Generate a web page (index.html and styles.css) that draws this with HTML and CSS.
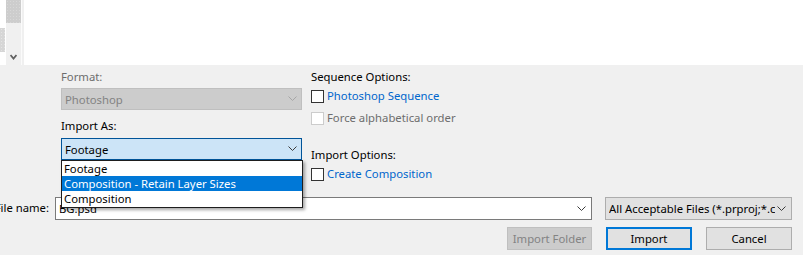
FILE: index.html
```html
<!DOCTYPE html>
<html>
<head>
<meta charset="utf-8">
<link rel="stylesheet" href="styles.css">
</head>
<body>
<div class="top">
  <div class="edge"><div class="tex"></div></div>
  <div class="sb">
    <div class="thumb"></div>
    <svg class="sb-chev" width="7" height="6" viewBox="0 0 7 6"><polyline points="0.5,1 3.5,4.5 6.5,1" fill="none" stroke="#606060" stroke-width="1.8"/></svg>
  </div>
  <div class="sep"></div>
  <div class="pane"></div>
</div>
<div class="main">
  <div class="opts">
    <div class="col-left">
      <div class="label label-first disabled">Format:</div>
      <div class="combo combo-disabled">
        <span>Photoshop</span>
        <svg width="9" height="6" viewBox="0 0 9 6"><polyline points="0.5,0.5 4.5,4.5 8.5,0.5" fill="none" stroke="#a6a6a6" stroke-width="1"/></svg>
      </div>
      <div class="label label-second">Import As:</div>
      <div class="combo combo-focus">
        <span>Footage</span>
        <svg width="9" height="6" viewBox="0 0 9 6"><polyline points="0.5,0.5 4.5,4.5 8.5,0.5" fill="none" stroke="#3c3c3c" stroke-width="1"/></svg>
      </div>
      <ul class="droplist">
        <li>Footage</li>
        <li class="sel">Composition - Retain Layer Sizes</li>
        <li>Composition</li>
      </ul>
    </div>
    <div class="col-right">
      <div class="heading">Sequence Options:</div>
      <div class="check check-1"><span class="box"></span><span class="ctext link">Photoshop Sequence</span></div>
      <div class="check check-2"><span class="box box-disabled"></span><span class="ctext disabled">Force alphabetical order</span></div>
      <div class="heading heading-2">Import Options:</div>
      <div class="check check-3"><span class="box"></span><span class="ctext link">Create Composition</span></div>
    </div>
  </div>
  <div class="filerow">
    <div class="flabel"><span>File name:</span></div>
    <div class="input">
      <span>BG.psd</span>
      <svg width="9" height="6" viewBox="0 0 9 6"><polyline points="0.5,0.5 4.5,4.5 8.5,0.5" fill="none" stroke="#3c3c3c" stroke-width="1"/></svg>
    </div>
    <div class="filter">
      <span class="ftext">All Acceptable Files (*.prproj;*.chproj;*.aep;*.psd)</span>
      <svg width="9" height="6" viewBox="0 0 9 6"><polyline points="0.5,0.5 4.5,4.5 8.5,0.5" fill="none" stroke="#3c3c3c" stroke-width="1"/></svg>
    </div>
  </div>
  <div class="btnrow">
    <div class="btn btn-disabled">Import Folder</div>
    <div class="btn btn-default">Import</div>
    <div class="btn">Cancel</div>
  </div>
</div>
</body>
</html>
```

FILE: styles.css
```css
* { box-sizing: border-box; }
body {
  margin: 0;
  width: 803px;
  height: 255px;
  overflow: hidden;
  background: #f0f0f0;
  font-family: "Noto Sans", "Open Sans", sans-serif;
  font-size: 11.3px;
  color: #000;
}
.top {
  display: flex;
  height: 65px;
  background: #fff;
}
.edge {
  width: 6px;
  padding-top: 28px;
}
.tex {
  width: 5px;
  height: 24px;
  background-color: #d6d6d6;
  background-image: radial-gradient(#e4e4e4 0.6px, transparent 0.7px);
  background-size: 3px 3px;
}
.sb {
  width: 15px;
  background: #f0f0f0;
  display: flex;
  flex-direction: column;
  align-items: center;
}
.thumb {
  width: 15px;
  height: 23px;
  background-color: #cdcdcd;
  background-image: radial-gradient(#d8d8d8 0.6px, transparent 0.7px);
  background-size: 3px 3px;
}
.sb-chev {
  margin-top: 31px;
}
.sep {
  width: 3px;
  background: linear-gradient(to right, #fbfbfb 0 1px, #f0f0f0 1px);
}
.pane { flex: 1; }

.main { height: 190px; }
.opts {
  display: grid;
  grid-template-columns: 241px 1fr;
  column-gap: 9px;
  padding-left: 61px;
  height: 132px;
}
.col-left { position: relative; }
.label {
  line-height: 15px;
}
.label-first { height: 23px; padding-top: 4px; }
.label-second { height: 28px; padding-top: 8px; }
.disabled { color: #6d6d6d; }
.combo {
  height: 22px;
  border: 1px solid;
  display: flex;
  align-items: center;
  justify-content: space-between;
  padding: 0 4px 0 3px;
  line-height: 15px;
}
.combo-disabled {
  background: #cccccc;
  border-color: #bfbfbf;
  color: #838383;
}
.combo-focus {
  background: #cce4f7;
  border-color: #005499;
}
.droplist {
  position: absolute;
  left: 0;
  top: 95px;
  width: 242px;
  margin: 0;
  padding: 0 0 1px 0;
  list-style: none;
  background: #fff;
  border: 1px solid #1e1e1e;
  box-shadow: 2px 2px 3px rgba(0, 0, 0, 0.35);
  z-index: 5;
}
.droplist li {
  height: 15px;
  line-height: 15px;
  padding-left: 2px;
  white-space: nowrap;
}
.droplist li.sel {
  background: #0078d7;
  color: #fff;
}

.col-right {
  display: flex;
  flex-direction: column;
  align-items: flex-start;
}
.heading {
  line-height: 15px;
  height: 25px;
  padding-top: 4px;
}
.heading-2 {
  margin-top: 22px;
  height: 21px;
  padding-top: 0;
}
.check {
  display: flex;
  align-items: flex-start;
  height: 13px;
}
.check-2 { margin-top: 9px; }
.box {
  width: 13px;
  height: 13px;
  border: 1px solid #333;
  background: #fff;
  margin-right: 3px;
  flex: none;
}
.box-disabled { border-color: #cccccc; }
.ctext {
  line-height: 15px;
  margin-top: -2px;
  white-space: nowrap;
}
.link { color: #0066cc; }

.filerow {
  display: flex;
  height: 23px;
  position: relative;
}
.flabel {
  width: 50px;
  flex: none;
  display: flex;
  justify-content: flex-end;
  padding-right: 1px;
  line-height: 21px;
  white-space: nowrap;
  margin-right: 5px;
}
.flabel span { flex: none; }
.input {
  width: 537px;
  height: 23px;
  background: #fff;
  border: 1px solid #7a7a7a;
  display: flex;
  align-items: center;
  justify-content: space-between;
  padding: 0 5px 0 3px;
  line-height: 15px;
}
.filter {
  width: 187px;
  margin-left: 13px;
  height: 23px;
  background: #e1e1e1;
  border: 1px solid #adadad;
  display: flex;
  align-items: center;
  padding: 0 5px 0 3px;
  line-height: 15px;
  gap: 2px;
}
.ftext {
  flex: 1;
  overflow: hidden;
  white-space: nowrap;
}
.filter svg { flex: none; }

.btnrow {
  display: flex;
  justify-content: flex-end;
  gap: 14px;
  padding-right: 11px;
  margin-top: 7px;
}
.btn {
  width: 86px;
  height: 23px;
  border: 1px solid #adadad;
  background: #e1e1e1;
  display: flex;
  align-items: center;
  justify-content: center;
  line-height: 15px;
}
.btn-disabled {
  width: 85px;
  background: #cccccc;
  border-color: #bfbfbf;
  color: #838383;
}
.btn-default {
  border: 2px solid #0078d7;
}
```
